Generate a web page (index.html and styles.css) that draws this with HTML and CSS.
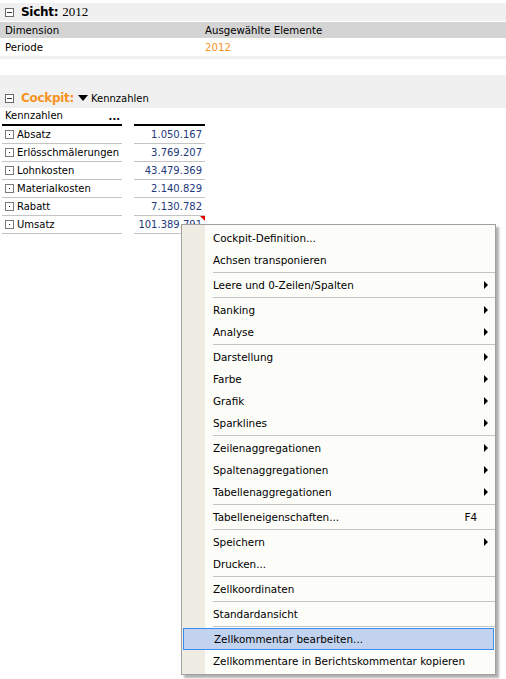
FILE: index.html
```html
<!DOCTYPE html>
<html>
<head>
<meta charset="utf-8">
<link rel="stylesheet" href="styles.css">
</head>
<body>
<div class="page">
  <div class="bar sicht">
    <span class="toggle"></span>
    <span class="bar-title">Sicht:</span>
    <span class="bar-value">2012</span>
  </div>
  <div class="dim-head">
    <span class="c1">Dimension</span>
    <span class="c2">Ausgewählte Elemente</span>
  </div>
  <div class="dim-row">
    <span class="c1">Periode</span>
    <span class="c2 orange">2012</span>
  </div>
  <div class="dim-sep"></div>
  <div class="dim-empty"></div>
  <div class="cockpit-band">
    <div class="bar cockpit">
      <span class="toggle"></span>
      <span class="bar-title orange">Cockpit:</span>
      <span class="tri-down"></span>
      <span class="bar-sub">Kennzahlen</span>
    </div>
  </div>
  <div class="grid">
    <div class="g-head">
      <div class="g-left head-left"><span>Kennzahlen</span><span class="dots">...</span></div>
      <div class="g-right"></div>
    </div>
    <div class="g-row"><div class="g-left"><span class="box"></span>Absatz</div><div class="g-right">1.050.167</div></div>
    <div class="g-row"><div class="g-left"><span class="box"></span>Erlösschmälerungen</div><div class="g-right">3.769.207</div></div>
    <div class="g-row"><div class="g-left"><span class="box"></span>Lohnkosten</div><div class="g-right">43.479.369</div></div>
    <div class="g-row"><div class="g-left"><span class="box"></span>Materialkosten</div><div class="g-right">2.140.829</div></div>
    <div class="g-row"><div class="g-left"><span class="box"></span>Rabatt</div><div class="g-right">7.130.782</div></div>
    <div class="g-row"><div class="g-left"><span class="box"></span>Umsatz</div><div class="g-right comment">101.389.791</div></div>
  </div>

  <div class="menu">
    <div class="mi">Cockpit-Definition...</div>
    <div class="mi">Achsen transponieren</div>
    <div class="sep"></div>
    <div class="mi sub">Leere und 0-Zeilen/Spalten</div>
    <div class="sep"></div>
    <div class="mi sub">Ranking</div>
    <div class="mi sub">Analyse</div>
    <div class="sep"></div>
    <div class="mi sub">Darstellung</div>
    <div class="mi sub">Farbe</div>
    <div class="mi sub">Grafik</div>
    <div class="mi sub">Sparklines</div>
    <div class="sep"></div>
    <div class="mi sub">Zeilenaggregationen</div>
    <div class="mi sub">Spaltenaggregationen</div>
    <div class="mi sub">Tabellenaggregationen</div>
    <div class="sep"></div>
    <div class="mi"><span>Tabelleneigenschaften...</span><span class="key">F4</span></div>
    <div class="sep"></div>
    <div class="mi sub">Speichern</div>
    <div class="mi">Drucken...</div>
    <div class="sep"></div>
    <div class="mi">Zellkoordinaten</div>
    <div class="sep"></div>
    <div class="mi">Standardansicht</div>
    <div class="sep"></div>
    <div class="mi hover">Zellkommentar bearbeiten...</div>
    <div class="mi">Zellkommentare in Berichtskommentar kopieren</div>
  </div>
</div>
</body>
</html>
```
FILE: styles.css
```css
html, body {
  margin: 0;
  padding: 0;
  background: #ffffff;
}
body {
  font-family: "DejaVu Sans", Verdana, sans-serif;
  font-size: 10.4px;
  color: #000;
  width: 506px;
  height: 679px;
  overflow: hidden;
}
.page {
  position: relative;
  padding-top: 3px;
}
.orange { color: #f7931e; }

.bar {
  display: flex;
  align-items: center;
  height: 18px;
  padding-left: 5px;
}
.sicht { background: #f0f0f0; }
.toggle {
  box-sizing: border-box;
  width: 9px;
  height: 9px;
  border: 1px solid #6a6a6a;
  position: relative;
  margin-right: 7px;
  background: #fff;
}
.toggle::after {
  content: "";
  position: absolute;
  left: 1px;
  right: 1px;
  top: 3px;
  height: 1px;
  background: #333;
}
.bar-title {
  font-weight: bold;
  font-size: 12px;
  letter-spacing: -0.3px;
  margin-right: 4px;
}
.bar-value {
  font-family: "Liberation Serif", serif;
  font-size: 13px;
}
.dim-head, .dim-row {
  display: flex;
  align-items: center;
  padding-left: 5px;
  font-size: 10.2px;
}
.dim-head {
  margin-top: 1px;
  height: 16px;
  background: #d4d4d4;
}
.dim-row {
  height: 18px;
  background: #fff;
}
.c1 { width: 200px; }
.dim-sep { height: 3px; background: #f0f0f0; }
.dim-empty { height: 16px; background: #fff; }

.cockpit-band {
  background: #f0f0f0;
  height: 33px;
  display: flex;
  align-items: flex-end;
}
.cockpit {
  height: 20px;
}
.tri-down {
  width: 0;
  height: 0;
  border-left: 5px solid transparent;
  border-right: 5px solid transparent;
  border-top: 6px solid #000;
  margin-right: 3px;
}
.bar-sub { font-size: 10px; }

.grid { font-size: 10px; }
.g-head, .g-row {
  display: flex;
}
.g-left {
  margin-left: 2px;
  width: 120px;
  box-sizing: border-box;
  display: flex;
  align-items: center;
  padding-left: 3px;
}
.g-right {
  margin-left: 12px;
  width: 71px;
  box-sizing: border-box;
  text-align: right;
  padding-right: 3px;
  color: #22397c;
  display: flex;
  align-items: center;
  justify-content: flex-end;
  position: relative;
}
.g-head .g-left, .g-head .g-right {
  height: 18px;
  border-bottom: 2px solid #000;
}
.head-left {
  justify-content: space-between;
  align-items: flex-start;
  padding-top: 2px;
}
.dots {
  font-weight: bold;
  margin-right: 2px;
  line-height: 14px;
}
.g-row .g-left, .g-row .g-right {
  height: 18px;
  border-bottom: 1px solid #c4c4c4;
}
.box {
  box-sizing: border-box;
  width: 9px;
  height: 9px;
  border: 1px solid #7a7a7a;
  margin-right: 3px;
  position: relative;
  flex: none;
}
.box::after {
  content: "";
  position: absolute;
  left: 3px;
  top: 3px;
  width: 1px;
  height: 1px;
  background: #222;
}
.comment::after {
  content: "";
  position: absolute;
  right: 0;
  top: 0;
  border-top: 5px solid #e00000;
  border-left: 5px solid transparent;
}

.menu {
  position: absolute;
  left: 181px;
  top: 224px;
  width: 315px;
  box-sizing: border-box;
  border: 1px solid #a0a0a0;
  padding: 2px 0;
  background: linear-gradient(to right, #efede3 0, #efede3 23px, #fcfcf9 23px);
  box-shadow: 3px 3px 2px rgba(0,0,0,0.3);
}
.mi {
  height: 22px;
  display: flex;
  align-items: center;
  padding-left: 31px;
  padding-right: 18px;
  justify-content: space-between;
  position: relative;
  box-sizing: border-box;
}
.mi.sub::after {
  content: "";
  position: absolute;
  right: 7px;
  top: 7px;
  border-left: 4px solid #000;
  border-top: 4px solid transparent;
  border-bottom: 4px solid transparent;
}
.mi.hover {
  margin: 0 1px;
  padding-left: 30px;
  border: 1px solid #3a8ef0;
  background: #c2d3ef;
}
.sep {
  height: 1px;
  background: #c4c4c2;
  margin: 1px 0 1px 31px;
}
```
